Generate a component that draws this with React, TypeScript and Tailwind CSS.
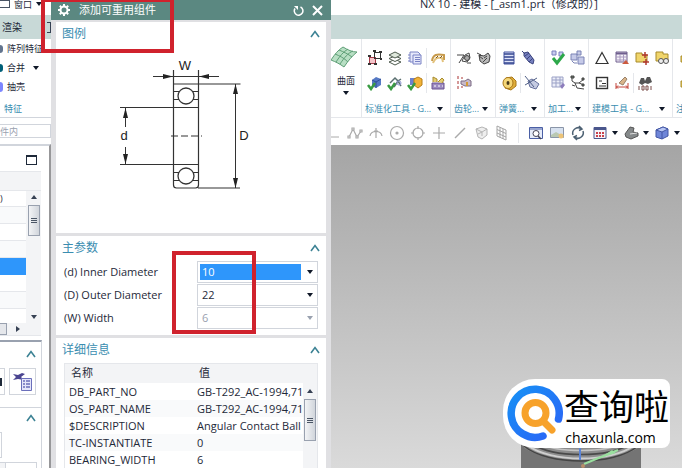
import React from "react";

const cjk = "font-['Open_Sans','Noto_Sans_CJK_SC',sans-serif]";

const drawings: Record<string, React.ReactNode> = {
  parts: (
    <g fill="none" stroke="#333">
      <rect x="2.5" y="7.5" width="6" height="6" fill="#f5c6cb" stroke="#a33a48" />
      <rect x="7.5" y="2.5" width="6" height="6" />
      <path d="M1 6h3M7 14h3M6 1h3M13 9h2M1 14h3M12 2h3" strokeWidth="2" />
    </g>
  ),
  layers: (
    <g fill="#fff" stroke="#4d5a4d">
      <path d="M2 12l6-2.500 6 2.500-6 3z" />
      <path d="M2 8.500l6-2.500 6 2.500-6 3z" />
      <path d="M2 5l6-3 6 3-6 3z" fill="#dfe8dc" />
    </g>
  ),
  sheets: (
    <g fill="#e6e8fb" stroke="#7a83c4">
      <path d="M3 2h8l2 2v8H3z" />
      <path d="M6 5h8v9H6zM8 7.500h5M8 9.500h5M8 11.500h5M3 5H1M3 8H1M3 11H1" />
    </g>
  ),
  wave: (
    <g fill="none">
      <path d="M2 11c1-7 5-7 12-6v5" stroke="#c79a4b" strokeWidth="2" />
      <path d="M3 13c2-5 4-6 9-5l1 4" stroke="#e3c27c" strokeWidth="2" />
      <path d="M6 8l2-2M10 8l2-2" stroke="#7d5a1e" />
    </g>
  ),
  blueAdd: (
    <g>
      <path d="M5 5l4-3 5 2v6l-5 3-4-2z" fill="#5679c4" />
      <path d="M5 5l4 2 5-3M9 7v6" stroke="#2f4f98" fill="none" />
      <path d="M1 10l3 4 4-6" stroke="#3a9b43" strokeWidth="2.500" fill="none" />
    </g>
  ),
  greenAdd: (
    <g fill="none">
      <path d="M3 8l5-5 3 3 3-2M7 12l4-6 3 5" stroke="#5a6f70" strokeWidth="1.500" />
      <path d="M1 10l3 4 4-6" stroke="#3a9b43" strokeWidth="2.500" />
      <circle cx="12" cy="8" r="2" stroke="#8f96cf" />
    </g>
  ),
  orangeAdd: (
    <g>
      <path d="M3 3h6v7H3z" fill="#6c82cf" />
      <path d="M7 4l4-2 4 2v6l-4 3-4-3z" fill="#f2b338" stroke="#b77e18" />
      <path d="M1 10l3 4 4-6" stroke="#3a9b43" strokeWidth="2.500" fill="none" />
    </g>
  ),
  toolbox: (
    <g>
      <path d="M2 8h12v6H2z" fill="#9c8bc0" stroke="#6b5290" />
      <path d="M3 7V2l4 2v3M8 7l4-4 2 2-2 3" fill="#e4cd72" stroke="#a88a2e" />
      <path d="M4 11h2M8 11h2M12 11h1" stroke="#fff" />
    </g>
  ),
  gearPair: (
    <g fill="none" stroke="#444">
      <path d="M1 5h7l-5 8M6 11l3-6 4-2 1 5-3 4z" />
      <circle cx="11" cy="8" r="2.500" fill="#aaa" />
      <path d="M11 13h4" />
    </g>
  ),
  gearSolid: (
    <g fill="#bbb" stroke="#444">
      <path d="M3 5l5 1 4-3 2 3-1 6-5 2-4-3z" />
      <path d="M1 3l4 2-2 1 4 3M8 8l3-2M7 12l4-4" fill="none" />
    </g>
  ),
  gearList: (
    <g>
      <path d="M2 1v3M2 6v3M2 11v3M5 3h2M5 12h2" stroke="#a33" />
      <path d="M5 6h4l3-2 3 2v5H9L5 9z" fill="#c8bac9" stroke="#7b6b85" />
      <path d="M11 7v4" stroke="#d49b35" strokeWidth="2" />
    </g>
  ),
  spring: (
    <g>
      <path d="M3 2h10v12H3z" fill="#dfe3f8" stroke="#4352a0" />
      <path d="M3 4h10M3 7h10M3 10h10M3 13h10" stroke="#33458f" strokeWidth="1.500" />
    </g>
  ),
  coil: (
    <g>
      <path d="M3 3l4-1 6 8-1 4-4-2-5-6z" fill="#7781c0" stroke="#3b447e" />
      <path d="M4 6l4-3M6 9l4-4M8 12l4-4M1 1l3 3" stroke="#3b447e" />
    </g>
  ),
  disc: (
    <g>
      <path d="M5 3l6-1 4 4v5l-5 4-6-2z" fill="#e0ae3a" stroke="#a9781a" />
      <ellipse cx="7" cy="8" rx="5" ry="5.500" fill="#f5d778" stroke="#a9781a" />
      <ellipse cx="7" cy="8" rx="1.500" ry="2" fill="#4a3a1a" />
    </g>
  ),
  cut: (
    <g>
      <path d="M4 6l4-2 7 5-3 5-6-2z" fill="#c5cbe2" stroke="#66709c" />
      <path d="M1 1l9 11M1 10l12-7" stroke="#516087" />
    </g>
  ),
  check: (
    <g>
      <path d="M2 1h4v4H2zM9 2h4v4H9z" fill="#c9cbee" stroke="#7b80bd" />
      <path d="M3 8l4 5 7-9" fill="none" stroke="#2da84a" strokeWidth="3" />
    </g>
  ),
  boxes: (
    <g fill="#c6cae8" stroke="#7b83b5">
      <path d="M7 1h4v4H7zM1 4h6v6H1zM8 7h6v7H8z" />
      <path d="M2 11l2 2h3" fill="none" />
    </g>
  ),
  grid: (
    <g>
      <path d="M2 2h11v10H2z" fill="#eceef8" stroke="#9ba1c6" />
      <path d="M2 5h11M2 8h11M6 2v10M10 2v10" stroke="#9ba1c6" />
      <path d="M10 11l3-3 2 2-3 4z" fill="#8d7dbc" />
    </g>
  ),
  tree: (
    <g fill="none" stroke="#444">
      <path d="M2 2v4l3 2h4l5-4M5 8l2 5 7 1M9 8l5 2M2 10l3 1" />
      <path d="M1 1h3v2H1zM12 3h2v2h-2zM12 9h2v2h-2z" fill="#6a7a6a" />
    </g>
  ),
  triangle: <path d="M8 2.500L14 13.500H2z" fill="none" stroke="#333" strokeWidth="1.200" />,
  table: (
    <g>
      <path d="M2 2h11v10H2z" fill="#f5f1f8" stroke="#6f5f8e" />
      <path d="M2 3.500h11" stroke="#6f5f8e" strokeWidth="2" />
      <path d="M2 7h11M2 10h11M6 4v8M9.500 4v8" stroke="#a99bc0" />
      <path d="M8 14l4-4 3 4z" fill="#cc5a3f" />
    </g>
  ),
  addPart: (
    <g>
      <path d="M2 3h6v2h5v7H2z" fill="#f0d56b" stroke="#a78a2a" />
      <path d="M11 2v6M8 5h6M9 12h6M12 9v6" stroke="#b03a30" strokeWidth="1.500" />
    </g>
  ),
  findPart: (
    <g>
      <path d="M2 2h7v2h5v7H2z" fill="#f0d56b" stroke="#a78a2a" />
      <circle cx="7" cy="11" r="2.500" fill="#eee" stroke="#555" />
      <circle cx="12" cy="11" r="2.500" fill="#eee" stroke="#555" />
    </g>
  ),
  card: (
    <g fill="none" stroke="#333">
      <rect x="2.500" y="2.500" width="11" height="11" strokeWidth="1.400" />
      <path d="M5 6h3M5 11h7M8 8.500h4" />
    </g>
  ),
  measure: (
    <g fill="none">
      <path d="M5 8l6-6 2 2-4 6z" fill="#d9b48a" stroke="#99826a" />
      <path d="M2 8v6M14 8v6M2 12h12M4 10.500L2.500 12 4 13.500M12 10.500l1.500 1.500-1.500 1.500" stroke="#c4453a" />
    </g>
  ),
  binoculars: (
    <g>
      <path d="M2 8l2-5h3l1 3 2-4h3l2 5-4 2-3-1-3 2z" fill="#555" />
      <path d="M2 11v4M5 11h2v4H5zM9 11h2v4H9zM14 11v4" stroke="#7b4c48" fill="none" />
    </g>
  ),
  lock: (
    <g>
      <path d="M3 6h11v6H3z" fill="#e2c653" stroke="#a78a2a" />
      <path d="M5 6V3h6v3" stroke="#a78a2a" fill="none" />
    </g>
  ),
  corner: <path d="M3 2v10h10" fill="none" stroke="#aaa" />,
  zigzag: (
    <g fill="none" stroke="#aaa" strokeWidth="1.200">
      <path d="M2 12l4-8 4 8 4-6" />
      <path d="M1 11h2v2H1zM5 3h2v2H5zM9 11h2v2H9zM13 5h2v2h-2z" fill="#fff" />
    </g>
  ),
  arc: <path d="M2 11c1-6 11-6 12 0M8 3v10M6 6h4" fill="none" stroke="#aaa" strokeWidth="1.200" />,
  target: (
    <g fill="none" stroke="#aaa" strokeWidth="1.200">
      <circle cx="8" cy="8" r="6.500" />
      <circle cx="8" cy="8" r="1" fill="#999" />
    </g>
  ),
  ring: (
    <g fill="none" stroke="#aaa" strokeWidth="1.200">
      <circle cx="8" cy="8" r="5" />
      <path d="M8 1v3M8 12v3M1 8h3M12 8h3" />
    </g>
  ),
  plus: <path d="M8 2v12M2 8h12" stroke="#aaa" strokeWidth="1.200" />,
  line: <path d="M3 13L13 3" stroke="#aaa" strokeWidth="1.400" />,
  face: (
    <g fill="#eee" stroke="#b5b5b5">
      <path d="M3 4l6-2 5 2v6l-5 4-4-2z" />
      <path d="M3 4l6 3 5-3M9 7v4M5 9l4-2" fill="none" />
    </g>
  ),
  mesh: (
    <path d="M3 1l9 4v10l-9-4zM3 4.500l9 4M3 8l9 4M6 2.500v10M9 4v10" fill="none" stroke="#a5a5a5" />
  ),
  zoomWindow: (
    <g fill="none">
      <path d="M1.500 2.500h13v11h-13z" stroke="#4a5fa5" fill="#e6ecf9" />
      <path d="M1 4h14" stroke="#4a5fa5" />
      <circle cx="8" cy="8.500" r="3" stroke="#445" fill="#fff" />
      <path d="M10 11l3 3" stroke="#445" strokeWidth="1.500" />
    </g>
  ),
  image: (
    <g>
      <path d="M1.500 2.500h13v10h-13z" fill="#d7e1ef" stroke="#8a95a8" />
      <path d="M2 10l5-3 7 4v1H2z" fill="#b9c8b2" />
      <circle cx="12" cy="11" r="2.500" fill="#ecc377" />
    </g>
  ),
  rotate: (
    <g fill="none" stroke="#4d6173" strokeWidth="1.500">
      <path d="M3 10a5.500 5.500 0 0 1 8-6.500M13 6a5.500 5.500 0 0 1-8 6.500" />
      <path d="M9 1l3 3-3 1.500M7 15l-3-3 3-1.500" />
    </g>
  ),
  windows: (
    <g>
      <path d="M2 2.500h12v11H2z" fill="#f5f5fa" stroke="#4a568c" />
      <path d="M2 4h12" stroke="#4a568c" strokeWidth="2" />
      <path d="M4 7h2v2H4zM7 7h2v2H7zM10 7h2v2h-2zM4 10h2v2H4zM7 10h2v2H7zM10 10h2v2h-2z" fill="#c9414c" />
    </g>
  ),
  solid: (
    <g>
      <path d="M2 9l5-7 4 1-1 4 5 1v3l-7 3-5-2z" fill="#85898a" stroke="#555" />
      <path d="M7 9l7-1" stroke="#ddd" />
    </g>
  ),
  cube: (
    <g stroke="#4357a5">
      <path d="M2 5l7-3 5 2v7l-6 3-6-2z" fill="#6f86d8" />
      <path d="M2 5l6 2 6-3-5-2z" fill="#b9c7f4" />
      <path d="M8 7v7" />
    </g>
  ),
};

function Drawing({ name }: { name: string }) {
  return (
    <svg width="16" height="16" viewBox="0 0 16 16" className="block shrink-0">
      {drawings[name]}
    </svg>
  );
}

function ToolButton({ name }: { name: string }) {
  return (
    <button aria-label={name} className="flex h-6 w-5 shrink-0 items-center justify-center">
      <Drawing name={name} />
    </button>
  );
}

function Caret({ className = "text-gray-900" }: { className?: string }) {
  return (
    <svg width="6" height="4" viewBox="0 0 6 4" className={`block shrink-0 ${className}`}>
      <path d="M0 0h6L3 4z" fill="currentColor" />
    </svg>
  );
}

function Chevron() {
  return (
    <button aria-label="toggle" className="flex h-4 w-4 items-center justify-center">
      <svg width="10" height="8" viewBox="0 0 10 8">
        <path d="M1 7l4-5.500L9 7" fill="none" stroke="#3c8294" strokeWidth="1.600" />
      </svg>
    </button>
  );
}

const groups = [
  {
    label: "标准化工具 - G...",
    width: "w-[89px]",
    rows: [
      ["parts", "layers", "sheets", "|", "wave"],
      ["blueAdd", "greenAdd", "orangeAdd", "|", "toolbox"],
    ],
  },
  { label: "齿轮...", width: "w-[45px]", rows: [["gearPair", "gearSolid"], ["gearList"]] },
  { label: "弹簧...", width: "w-[49px]", rows: [["spring", "coil"], ["disc", "|", "cut"]] },
  { label: "加工...", width: "w-11", rows: [["check", "boxes"], ["grid", "tree"]] },
  {
    label: "建模工具 - G...",
    width: "w-21",
    rows: [
      ["triangle", "table", "addPart", "findPart"],
      ["card", "measure", "|", "binoculars"],
    ],
  },
  { label: "注...", width: "w-20", rows: [["lock"], ["lock"]] },
];

function Ribbon() {
  return (
    <div className="flex h-[79px] shrink-0 border-b border-gray-200 bg-white">
      <button className="flex w-[31px] shrink-0 flex-col items-center border-r border-gray-200 pt-1.5 text-[9px] leading-3 text-gray-800">
        <svg width="28" height="24" viewBox="0 0 28 24" className="mr-1 shrink-0">
          <path d="M1 15C5 9 8 5 13 2c5 3 9 5 14 5-5 4-9 9-13 15-4-3-8-5-13-7z" fill="#b8dfc4" stroke="#5f9f77" />
          <path d="M5 9c5 2 9 4 13 8M9 5c5 2 9 4 13 7M6 17c4-6 7-10 12-13M10 19c4-6 8-11 13-13" fill="none" stroke="#5f9f77" />
        </svg>
        <span className="mt-1.5 mb-1">曲面</span>
        <Caret />
      </button>
      {groups.map((group) => (
        <div
          key={group.label}
          className={`flex shrink-0 flex-col overflow-hidden border-r border-gray-200 px-[3px] pt-1.5 ${group.width}`}
        >
          {group.rows.map((row, i) => (
            <div key={i} className="flex h-[25px] items-center">
              {row.map((name, j) =>
                name === "|" ? (
                  <span key={j} className="mx-px h-5 w-px shrink-0 bg-gray-200" />
                ) : (
                  <ToolButton key={j} name={name} />
                )
              )}
            </div>
          ))}
          <div className="mt-2 flex items-center justify-between pr-1 text-[9px] leading-3 whitespace-nowrap text-[#3a8db0]">
            {group.label}
            <Caret />
          </div>
        </div>
      ))}
    </div>
  );
}

const snapTools = ["corner", "zigzag", "arc", "target", "ring", "plus", "line", "face", "mesh"];
const viewTools = ["zoomWindow", "image", "rotate"];
const menuTools = ["windows", "solid", "cube"];

function SnapBar() {
  return (
    <div className="flex h-[27px] shrink-0 items-center overflow-hidden bg-white pt-0.5">
      <div className="-ml-2 flex shrink-0">
        {snapTools.map((name) => (
          <button key={name} aria-label={name} className="flex w-[21px] justify-center">
            <Drawing name={name} />
          </button>
        ))}
      </div>
      <span className="mr-1.5 ml-1.5 h-5 w-px bg-gray-200" />
      {viewTools.map((name) => (
        <button key={name} aria-label={name} className="flex w-[21px] shrink-0 justify-center">
          <Drawing name={name} />
        </button>
      ))}
      <div className="ml-1 flex shrink-0 gap-[5px]">
        {menuTools.map((name) => (
          <button key={name} aria-label={name} className="flex shrink-0 items-center gap-1">
            <Drawing name={name} />
            <Caret />
          </button>
        ))}
      </div>
    </div>
  );
}

function Badge() {
  return (
    <a
      href="#chaxunla"
      className="absolute right-3 bottom-5 flex h-[69px] w-[167px] items-center rounded-l-[32px] rounded-r-lg bg-white pl-1 text-black"
    >
      <svg width="56" height="58" viewBox="0 0 56 58" className="shrink-0">
        <defs>
          <linearGradient id="ring" x1="0" y1="0" x2="1" y2="1">
            <stop offset="0" stopColor="#1790f5" />
            <stop offset="1" stopColor="#2b63f6" />
          </linearGradient>
        </defs>
        <path d="M51.500 34A24 24 0 1 0 36 51" fill="none" stroke="url(#ring)" strokeWidth="7.500" strokeLinecap="round" />
        <circle cx="28.500" cy="28" r="10.500" fill="none" stroke="#f7a22b" strokeWidth="7" />
        <path d="M37 37l8 8" stroke="#f7a22b" strokeWidth="7" strokeLinecap="round" />
      </svg>
      <span className="flex flex-1 flex-col items-center pt-0.5">
        <span className="text-[35px] leading-[46px] whitespace-nowrap">查询啦</span>
        <span className="mr-3 text-sm leading-4 font-medium">chaxunla.com</span>
      </span>
    </a>
  );
}

function Viewport() {
  return (
    <main className="relative flex flex-1 flex-col justify-end overflow-hidden bg-linear-to-b from-[#a5a5a5] to-[#dadada]">
      <svg width="122" height="30" viewBox="0 0 122 30" className="mr-10 self-end">
        <path d="M1 2h120v28H1z" fill="#747474" />
        <path d="M4 2h114v8c-24 16-90 16-114 0z" fill="#8d8d8d" />
        <path d="M4 8c24 20 90 20 114 0" fill="none" stroke="#444" strokeWidth="1.500" />
        <path d="M7 7c24 18 84 18 108 0" fill="none" stroke="#cfcfcf" strokeWidth="2" />
        <path d="M12 6c22 14 76 14 98 0" fill="none" stroke="#4a4a4a" strokeWidth="1.500" />
        <path d="M18 5c20 10 66 10 86 0" fill="none" stroke="#c4c4c4" strokeWidth="1.500" />
        <path d="M60 8v14" stroke="#5b84d8" strokeWidth="2" />
        <path d="M64 26l34-14" stroke="#9adf9f" strokeWidth="2" />
        <path d="M80 20l12-8 4 3z" fill="#9adf9f" />
        <circle cx="63" cy="28" r="2" fill="#b98d6a" />
      </svg>
      <Badge />
    </main>
  );
}

function ThumbGrip() {
  return (
    <div className="flex w-full flex-col items-center justify-center gap-px border border-gray-400 bg-linear-to-r from-gray-100 to-gray-300">
      <span className="h-px w-1.5 bg-gray-600" />
      <span className="h-px w-1.5 bg-gray-600" />
      <span className="h-px w-1.5 bg-gray-600" />
    </div>
  );
}

function LeftColumn() {
  return (
    <div className="flex w-[51px] shrink-0 flex-col overflow-hidden bg-white text-[9px] text-gray-800">
      <div className="flex h-[15px] shrink-0 items-start gap-1 whitespace-nowrap">
        <span className="h-2 w-2.5 border border-l-0 border-gray-600" />
        <span className="leading-[9px]">窗口</span>
        <span className="pt-0.5">
          <Caret />
        </span>
      </div>
      <div className="flex h-6 shrink-0 items-center justify-between overflow-hidden bg-[#c8d9d7] pl-0.5 text-[10px] whitespace-nowrap">
        <button>渲染</button>
        <span className="h-[11px] w-1 border-y border-r border-gray-700" />
      </div>
      <div className="flex h-[79px] shrink-0 flex-col border-b border-gray-300 whitespace-nowrap">
        <button className="flex h-[19px] items-center gap-1">
          <span className="h-2 w-[3px] rounded-r bg-slate-500" />
          阵列特征
        </button>
        <button className="flex h-[19px] items-center gap-1">
          <span className="h-2 w-[3px] rounded-r-full bg-cyan-800" />
          合并
          <span className="ml-1">
            <Caret />
          </span>
        </button>
        <button className="flex h-[19px] items-center gap-1">
          <span className="h-2.5 w-[3px] rounded-r bg-indigo-400" />
          抽壳
        </button>
        <span className="mt-auto mb-0.5 pl-1 leading-3 text-[#3a8db0]">特征</span>
      </div>
      <input
        aria-label="搜索范围"
        defaultValue="件内"
        className="mt-1.5 h-3.5 w-full shrink-0 border border-l-0 border-gray-300 px-0 text-gray-400"
      />
      <div className="mt-1.5 flex flex-1 flex-col border-t-2 border-r-2 border-t-gray-300 border-r-[#979799]">
        <button aria-label="最大化" className="mt-[9px] ml-[26px] h-2.5 w-[11px] shrink-0 border border-t-2 border-gray-800" />
        <div className="mt-1.5 mr-2 flex h-[165px] shrink-0 flex-col border-y border-gray-200">
          <div className="h-[19px] shrink-0 border-b border-gray-200 bg-gray-100" />
          <div className="flex flex-1">
            <div className="w-[26px]">
              <div className="h-4 border-b border-gray-200 leading-4">)</div>
              <div className="h-[17px] border-b border-gray-200 bg-gray-50" />
              <div className="h-[17px] border-b border-gray-200" />
              <div className="h-[17px] border-b border-gray-200 bg-gray-50" />
              <div className="h-[17px] bg-[#2e96fb]" />
              <div className="h-[17px] border-b border-gray-200" />
              <div className="h-[17px] border-b border-gray-200 bg-gray-50" />
            </div>
            <div className="flex flex-1 flex-col items-center justify-between bg-gray-100 py-1">
              <div className="flex w-full flex-col items-center gap-1.5">
                <span className="rotate-180">
                  <Caret className="text-gray-700" />
                </span>
                <div className="flex h-[31px] w-3">
                  <ThumbGrip />
                </div>
              </div>
              <Caret className="text-gray-700" />
            </div>
          </div>
          <div className="flex h-3 shrink-0 items-center gap-2 bg-gray-100">
            <span className="h-full w-[7px] border border-l-0 border-gray-400 bg-gray-200" />
            <span className="-rotate-90">
              <Caret className="text-gray-700" />
            </span>
          </div>
        </div>
        <div className="mt-1 mr-[7px] flex flex-1 flex-col border-t-2 border-r border-gray-300 border-t-gray-400">
          <div className="mt-1 flex justify-end px-0.5">
            <Chevron />
          </div>
          <div className="mt-1.5 flex gap-1">
            <button aria-label="查找" className="flex h-[27px] w-[5px] items-center border border-l-0 border-gray-300">
              <span className="h-2 w-0.5 bg-gray-800" />
            </button>
            <button aria-label="属性" className="flex h-[27px] w-[27px] items-center justify-center border border-gray-300">
              <svg width="21" height="21" viewBox="0 0 21 21">
                <path d="M1 3l5 1 4-2 3 1-4 3 3 3-6-1-5 1 3-3z" fill="#4a4490" />
                <path d="M9.500 7.500h10v12h-10z" fill="#e4e5fa" stroke="#6b6fbb" />
                <path d="M11 10h2M11 13h2M11 16h2M14 10h4M14 13h4M14 16h4" stroke="#6b6fbb" strokeWidth="1.500" />
              </svg>
            </button>
          </div>
          <div className="mt-3 flex justify-end border-t border-gray-300 px-0.5 pt-0.5">
            <Chevron />
          </div>
          <div className="mt-1.5 h-[26px] w-0.5 border border-l-0 border-gray-300" />
          <div className="mt-1 mr-1 flex h-6 border border-l-0 border-gray-300">
            <span className="w-1.5 border-r border-gray-300 bg-gray-100" />
          </div>
        </div>
      </div>
    </div>
  );
}

function PanelTitle({ children }: { children: React.ReactNode }) {
  return (
    <div className="flex h-[23px] items-center justify-between pr-[3px] pl-1.5 text-xs text-[#3a8db0]">
      {children}
      <Chevron />
    </div>
  );
}

function Bearing() {
  return (
    <svg width="150" height="142" viewBox="110 55 150 142" className="ml-[54px] block">
      <g fill="none" stroke="#333">
        <path d="M173.500 70v115q0 3 3 3h19q3 0 3-3V70M173.500 84h67M198 188h42" strokeWidth="1.200" />
        <path d="M120 107.500h78M120 164.500h78M153 76.500h66M125.500 108v19M125.500 147v17M235.500 84v104" />
        <path d="M173 91.500h6M193 91.500h6M173 99.500h6M193 99.500h6M173 172.500h6M193 172.500h6M173 180.500h6M193 180.500h6" strokeWidth="1.200" />
        <circle cx="186" cy="96" r="8" strokeWidth="1.300" />
        <circle cx="186" cy="176" r="8" strokeWidth="1.300" />
        <path d="M171 136h31" strokeDasharray="7 3" />
      </g>
      <path
        d="M173 76.500l-10-2.500v5zM199 76.500l10-2.500v5zM125.500 108l-2.500 10h5zM125.500 164l-2.500-10h5zM235.500 84l-2.500 10h5zM235.500 188l-2.500-10h5z"
        fill="#222"
      />
      <g fontFamily="Liberation Sans, sans-serif" fontSize="13" fill="#222" textAnchor="middle">
        <text x="185" y="70">W</text>
        <text x="124" y="140">d</text>
        <text x="244" y="140">D</text>
      </g>
    </svg>
  );
}

const params = [
  { id: "inner", label: "(d) Inner Diameter", value: "10", tone: "bg-[#2e96fb] text-white", disabled: false },
  { id: "outer", label: "(D) Outer Diameter", value: "22", tone: "bg-white text-gray-800", disabled: false },
  { id: "width", label: "(W) Width", value: "6", tone: "bg-white text-gray-400", disabled: true },
];

const details = [
  ["DB_PART_NO", "GB-T292_AC-1994,719"],
  ["OS_PART_NAME", "GB-T292_AC-1994,719"],
  ["$DESCRIPTION", "Angular Contact Ball B"],
  ["TC-INSTANTIATE", "0"],
  ["BEARING_WIDTH", "6"],
];

function ReuseDialog() {
  return (
    <section className="flex w-[280px] shrink-0 flex-col overflow-hidden bg-[#e0e0e3] text-[11px] text-gray-800">
      <header className="flex h-5 shrink-0 items-center gap-2 bg-[#5b8881] pr-2 pl-1.5 text-white">
        <svg width="14" height="14" viewBox="0 0 14 14">
          <circle cx="7" cy="7" r="3.500" fill="none" stroke="#fff" strokeWidth="2" />
          <path d="M7 1v2M7 11v2M1 7h2M11 7h2M2.800 2.800l1.400 1.400M9.800 9.800l1.400 1.400M2.800 11.200l1.400-1.400M9.800 4.200l1.400-1.400" stroke="#fff" strokeWidth="2" />
        </svg>
        <h1 className="flex-1">添加可重用组件</h1>
        <button aria-label="重置">
          <svg width="11" height="11" viewBox="0 0 11 11">
            <path d="M7.500 2A4.300 4.300 0 1 1 2 3.500" fill="none" stroke="#fff" strokeWidth="1.500" />
            <path d="M1 1h4v4z" fill="#fff" />
          </svg>
        </button>
        <button aria-label="关闭">
          <svg width="11" height="11" viewBox="0 0 11 11">
            <path d="M1 1l9 9M10 1l-9 9" stroke="#fff" strokeWidth="2" />
          </svg>
        </button>
      </header>
      <div className="mr-[5px] ml-[5px] flex flex-1 flex-col gap-[3px] pt-0.5">
        <div className="h-[211px] shrink-0 bg-white">
          <PanelTitle>图例</PanelTitle>
          <div className="mt-2.5">
            <Bearing />
          </div>
        </div>
        <div className="shrink-0 bg-white pb-1.5">
          <PanelTitle>主参数</PanelTitle>
          <div className="mt-0.5 flex flex-col gap-px pr-2 pl-2">
            {params.map((param) => (
              <div key={param.id} className="flex items-center justify-between">
                <label htmlFor={param.id}>{param.label}</label>
                <div className="relative flex h-[22px] w-[121px] border border-gray-300 bg-white p-0.5">
                  <select
                    id={param.id}
                    disabled={param.disabled}
                    className={`mr-3.5 w-full appearance-none px-0.5 opacity-100 ${param.tone}`}
                  >
                    <option>{param.value}</option>
                  </select>
                  <span className="pointer-events-none absolute top-2 right-1">
                    <Caret className={param.disabled ? "text-gray-400" : "text-gray-900"} />
                  </span>
                </div>
              </div>
            ))}
          </div>
        </div>
        <div className="flex flex-1 flex-col bg-white">
          <PanelTitle>详细信息</PanelTitle>
          <div className="mx-2 mt-0.5 flex-1 border border-b-0 border-gray-200">
            <div className="flex">
              <table className="flex-1 table-fixed border-collapse text-left">
                <thead>
                  <tr className="h-[19px] bg-gray-100">
                    <th className="w-[128px] pl-1.5 font-normal">名称</th>
                    <th className="pl-1.5 font-normal">值</th>
                  </tr>
                </thead>
                <tbody>
                  {details.map(([name, value]) => (
                    <tr key={name} className="h-[17px] leading-4 even:bg-gray-50">
                      <td className="pl-1">{name}</td>
                      <td className="max-w-[106px] overflow-hidden pl-1 whitespace-nowrap">{value}</td>
                    </tr>
                  ))}
                </tbody>
              </table>
              <div className="flex w-3.5 flex-col items-center bg-gray-100">
                <div className="h-[19px] w-full" />
                <span className="my-1.5 rotate-180">
                  <Caret className="text-gray-700" />
                </span>
                <div className="flex h-[42px] w-3">
                  <ThumbGrip />
                </div>
              </div>
            </div>
          </div>
        </div>
      </div>
    </section>
  );
}

export default function App() {
  return (
    <div className={`relative flex h-screen overflow-hidden bg-white ${cjk}`}>
      <LeftColumn />
      <ReuseDialog />
      <div className="flex min-w-0 flex-1 flex-col overflow-hidden">
        <div className="h-[15px] shrink-0 overflow-hidden bg-white pl-[89px] text-[11px] leading-[7px] whitespace-nowrap text-gray-800">
          NX 10 - 建模 - [_asm1.prt（修改的）]
        </div>
        <div className="h-6 shrink-0 bg-[#c8d9d7]" />
        <Ribbon />
        <SnapBar />
        <Viewport />
      </div>
      <div className="pointer-events-none absolute top-0 left-[41px] h-[53px] w-[133px] border-4 border-t-2 border-[#d0222d]" />
      <div className="pointer-events-none absolute top-[251px] left-[172px] h-[83px] w-[84px] border-4 border-[#d0222d]" />
    </div>
  );
}
